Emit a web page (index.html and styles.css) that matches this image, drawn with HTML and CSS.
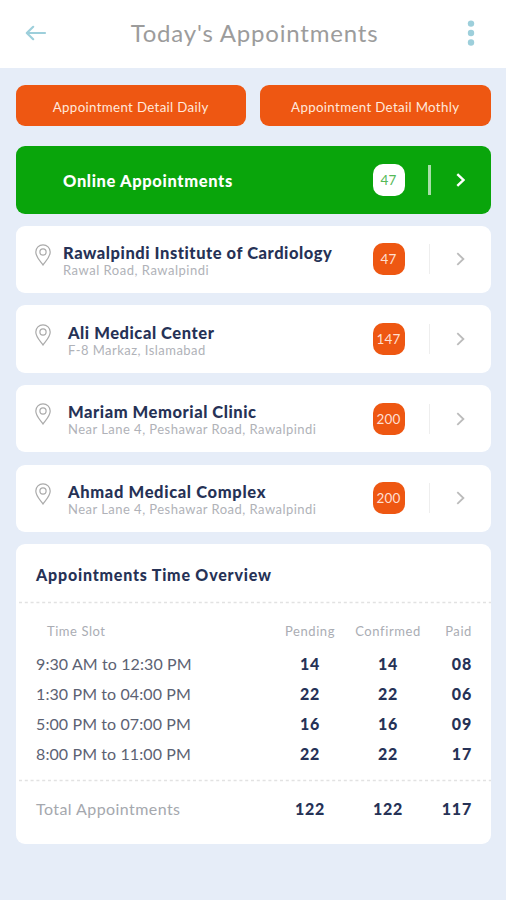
FILE: index.html
```html
<!DOCTYPE html>
<html lang="en">
<head>
<meta charset="utf-8">
<title>Today's Appointments</title>
<link rel="stylesheet" href="styles.css">
</head>
<body>
<svg class="defs" aria-hidden="true">
  <symbol id="pin" viewBox="0 0 16 22"><path d="M8 21C6.5 18.200 .8 13.500 .8 8a7.200 7.200 0 0 1 14.400 0C15.200 13.500 9.500 18.200 8 21Z"/><circle cx="8" cy="8" r="3.100"/></symbol>
  <symbol id="chevron" viewBox="0 0 9 14"><path d="M1.300 1.200 7.400 7 1.300 12.800"/></symbol>
</svg>
<header class="topbar">
  <svg class="back" viewBox="0 0 22 16"><path d="M20 8H2M8.200 1.800 1.800 8l6.400 6.200"/></svg>
  <h1 class="title">Today's Appointments</h1>
  <svg class="more" viewBox="0 0 8 26"><circle cx="4" cy="3.600" r="3.200"/><circle cx="4" cy="13" r="3.200"/><circle cx="4" cy="22.500" r="3.200"/></svg>
</header>
<main class="content">
  <nav class="tabs">
    <button class="tab tab-daily">Appointment Detail Daily</button>
    <button class="tab tab-monthly">Appointment Detail Mothly</button>
  </nav>
  <section class="cards">
    <article class="card online">
      <span></span>
      <div class="info"><h2 class="name n0">Online Appointments</h2></div>
      <span class="badge">47</span><i class="rule"></i><svg class="chevron"><use href="#chevron"/></svg>
    </article>
    <article class="card">
      <svg class="pin"><use href="#pin"/></svg>
      <div class="info"><h2 class="name n1">Rawalpindi Institute of Cardiology</h2><p class="place p1">Rawal Road, Rawalpindi</p></div>
      <span class="badge">47</span><i class="rule"></i><svg class="chevron"><use href="#chevron"/></svg>
    </article>
    <article class="card inset">
      <svg class="pin"><use href="#pin"/></svg>
      <div class="info"><h2 class="name n2">Ali Medical Center</h2><p class="place p2">F-8 Markaz, Islamabad</p></div>
      <span class="badge">147</span><i class="rule"></i><svg class="chevron"><use href="#chevron"/></svg>
    </article>
    <article class="card inset">
      <svg class="pin"><use href="#pin"/></svg>
      <div class="info"><h2 class="name n3">Mariam Memorial Clinic</h2><p class="place p3">Near Lane 4, Peshawar Road, Rawalpindi</p></div>
      <span class="badge">200</span><i class="rule"></i><svg class="chevron"><use href="#chevron"/></svg>
    </article>
    <article class="card inset">
      <svg class="pin"><use href="#pin"/></svg>
      <div class="info"><h2 class="name n4">Ahmad Medical Complex</h2><p class="place p3">Near Lane 4, Peshawar Road, Rawalpindi</p></div>
      <span class="badge">200</span><i class="rule"></i><svg class="chevron"><use href="#chevron"/></svg>
    </article>
  </section>
  <section class="overview">
    <h2 class="overview-title">Appointments Time Overview</h2>
    <svg class="dots"><line x1="3" y1="1.500" x2="475" y2="1.500"/></svg>
    <div class="slots">
      <div class="row head"><span class="slot-head">Time Slot</span><span>Pending</span><span>Confirmed</span><span class="paid">Paid</span></div>
      <div class="row"><span class="time t1">9:30 AM to 12:30 PM</span><b>14</b><b>14</b><b class="paid">08</b></div>
      <div class="row"><span class="time t2">1:30 PM to 04:00 PM</span><b>22</b><b>22</b><b class="paid">06</b></div>
      <div class="row"><span class="time t2">5:00 PM to 07:00 PM</span><b>16</b><b>16</b><b class="paid">09</b></div>
      <div class="row"><span class="time t2">8:00 PM to 11:00 PM</span><b>22</b><b>22</b><b class="paid">17</b></div>
    </div>
    <svg class="dots"><line x1="3" y1="1.500" x2="475" y2="1.500"/></svg>
    <div class="row total"><span class="total-label">Total Appointments</span><b>122</b><b>122</b><b class="paid">117</b></div>
  </section>
</main>
</body>
</html>
```
FILE: styles.css
```css
* { box-sizing: border-box; }
body { margin: 0; min-height: 900px; background: #e6edf8; font-family: Lato, "Liberation Sans", sans-serif; color: #263256; }
h1, h2, p { margin: 0; }
.defs { display: none; }
svg { display: block; fill: none; overflow: visible; }
.topbar { height: 68px; padding: 0 31px 2px 25px; display: flex; align-items: center; justify-content: space-between; background: #fff; }
.back { width: 22px; height: 16px; stroke: #9dcfdb; stroke-width: 2.200; stroke-linecap: round; stroke-linejoin: round; }
.title { margin: -1px 5px 0 0; font-size: 24px; font-weight: 400; line-height: 30px; color: #9c9c9c; letter-spacing: .8px; white-space: nowrap; }
.more { width: 8px; height: 26px; fill: #9dcfdb; }
.content { padding: 17px 15.500px 0; }
.tabs { display: grid; grid-template-columns: 1fr 1fr; gap: 14px; }
.tab { height: 40.500px; padding: 3px 0 0; border: 0; border-radius: 9px; background: #ee5712; color: #ffe8dc; font: 13.300px Lato, sans-serif; letter-spacing: .33px; white-space: nowrap; }
.cards { display: grid; gap: 12.200px; margin-top: 20.700px; }
.card { height: 67.400px; padding: 0 26px 0 19.500px; display: grid; grid-template-columns: 28px 1fr 32px 25px 26px 9px; align-items: center; border-radius: 9px; background: #fff; }
.card.inset { grid-template-columns: 33px 1fr 32px 25px 26px 9px; }
.online { background: #09a50b; color: #fff; }
.pin { width: 16px; height: 22px; margin-bottom: 9px; stroke: #aaa; stroke-width: 1.200; }
.info { white-space: nowrap; min-width: 0; padding-top: 3px; }
.name { font-size: 16.500px; line-height: 18px; font-weight: 900; letter-spacing: .55px; }
.n0 { letter-spacing: .63px; }
.n4 { letter-spacing: .65px; }
.place { font-size: 13px; line-height: 16px; color: #b0b2b8; letter-spacing: .47px; }
.p1 { letter-spacing: .52px; }
.badge { width: 32px; height: 32px; border-radius: 10px; background: #ee5712; color: #ffdfd0; display: flex; align-items: center; justify-content: center; font-size: 13.500px; letter-spacing: .2px; }
.online .badge { background: #fff; color: #55b957; }
.rule { justify-self: end; width: 1px; height: 30px; background: #eee; }
.online .rule { width: 3px; margin-right: -1px; background: #a8dfa8; }
.chevron { grid-column: 6; width: 9px; height: 14px; stroke: #bbb; stroke-width: 1.800; }
.online .chevron { stroke: #fff; stroke-width: 2.400; }
.overview { margin-top: 12.200px; height: 300px; border-radius: 9px; background: #fff; }
.overview-title { height: 57px; padding: 1px 0 0 20.500px; line-height: 60px; font-size: 16px; font-weight: 900; letter-spacing: .8px; }
.dots { width: 100%; height: 3px; stroke: #e2e2e2; stroke-width: 1.500; stroke-dasharray: 3 2.800; }
.row { display: grid; grid-template-columns: 234px 80px 76px 45px; align-items: center; padding-left: 20.500px; height: 29.800px; text-align: center; white-space: nowrap; }
.row > :first-child { text-align: left; }
.row > .paid { text-align: right; }
.slots { height: 175px; padding-top: 8px; }
.head { height: 37px; font-size: 13px; color: #aaadb4; letter-spacing: .6px; }
.slot-head { padding-left: 11px; letter-spacing: .55px; }
.time { font-size: 16px; color: #5c6273; letter-spacing: .1px; }
.row b { font-weight: 900; font-size: 16px; letter-spacing: .8px; }
.row > b.paid, .row > span.paid { margin-right: -1px; }
.total { height: 52px; }
.total-label { font-size: 16px; color: #a5a8ae; letter-spacing: .43px; }
```
